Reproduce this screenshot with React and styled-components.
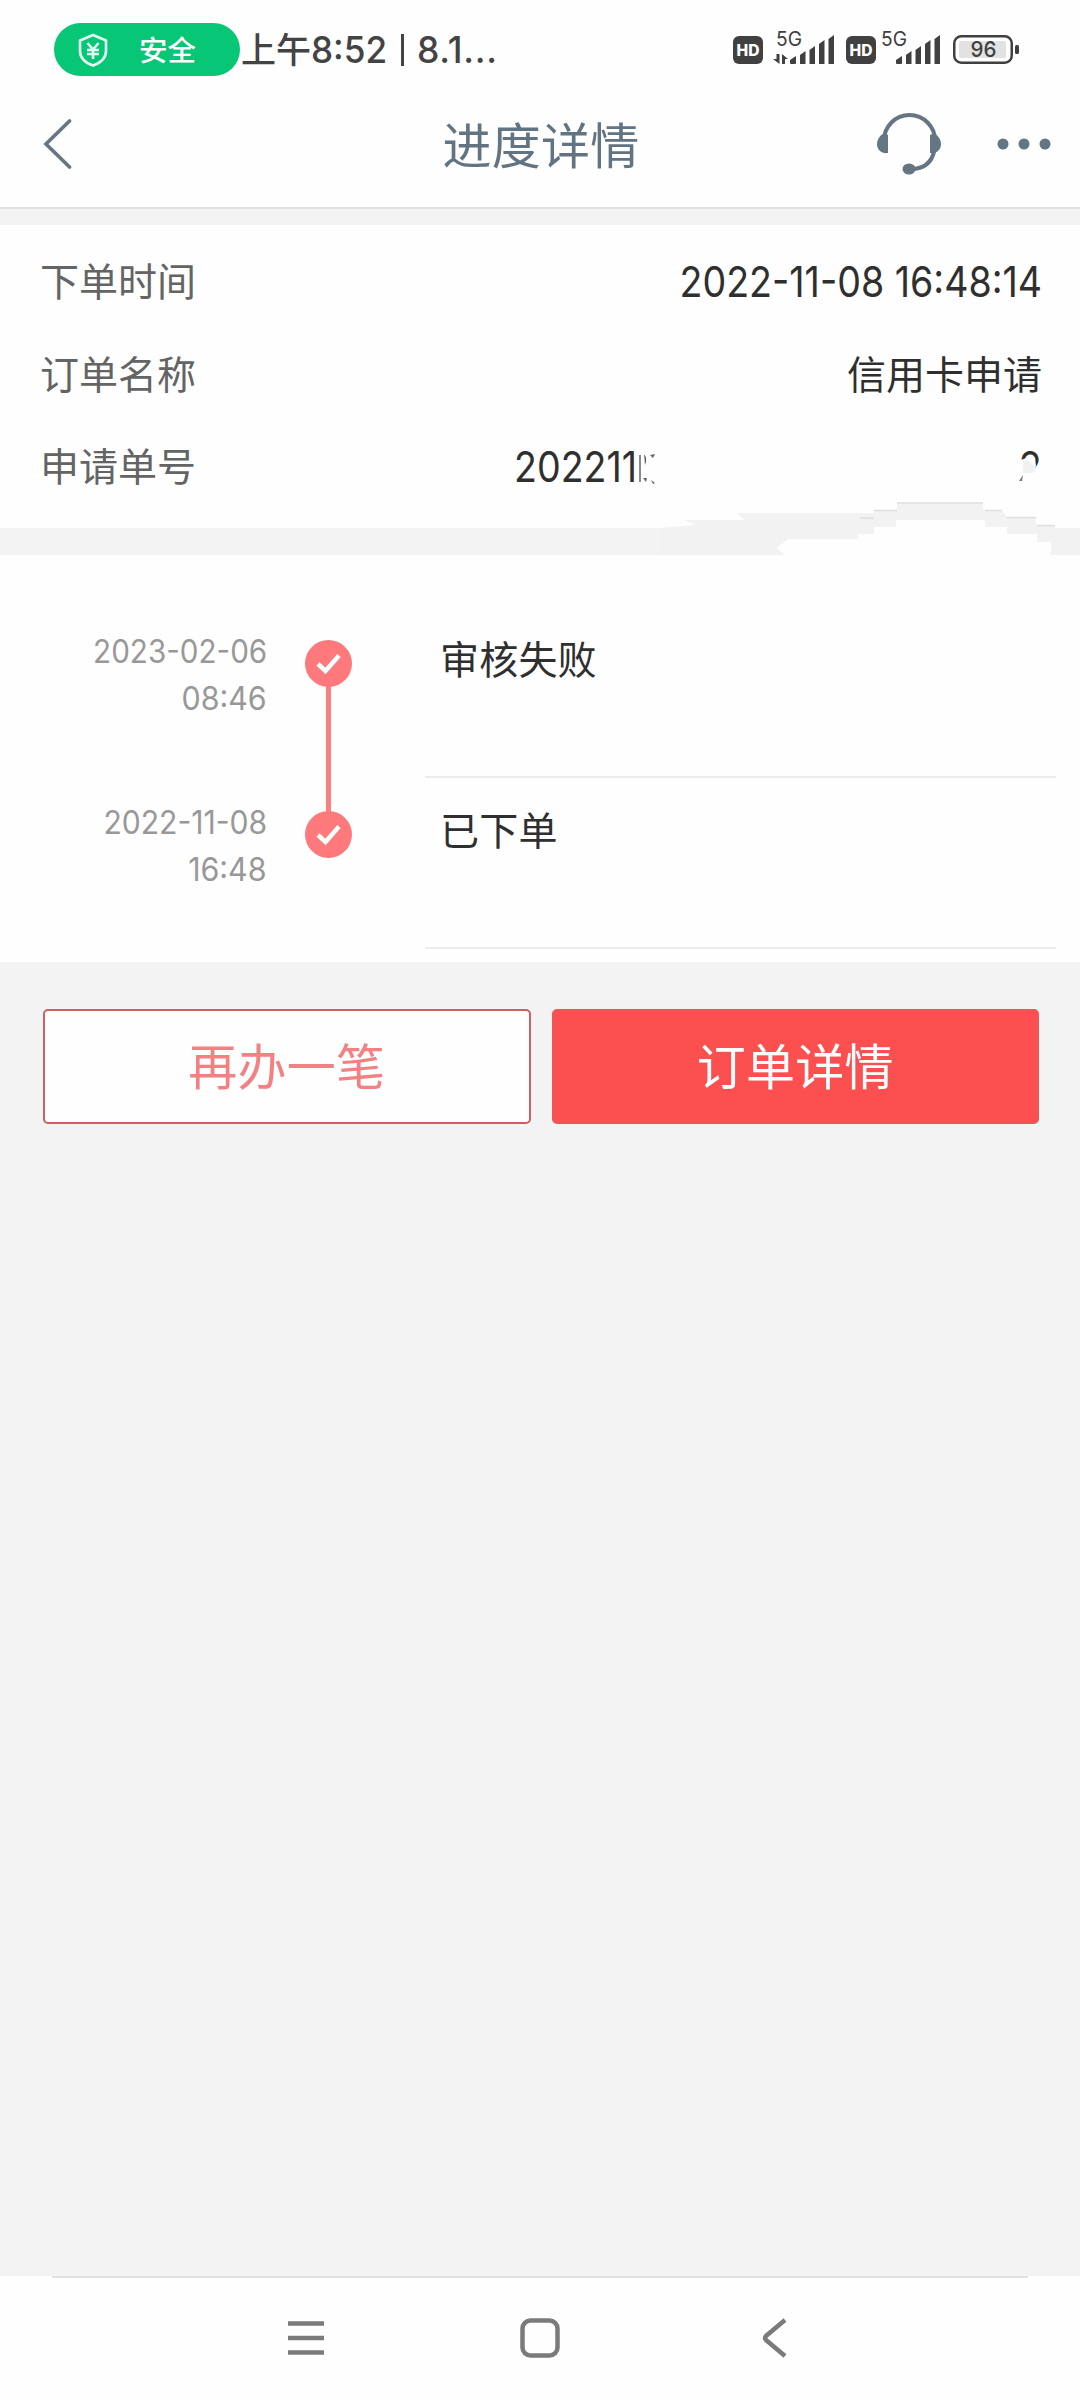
import React from 'react';
import styled, { createGlobalStyle } from 'styled-components';

const GlobalStyle = createGlobalStyle`
    * {
        box-sizing: border-box;
    }

    body {
        margin: 0;
        background: #f3f3f3;
        font-family: "Noto Sans CJK SC", sans-serif;
    }
`;

const Page = styled.div`
    display: flex;
    flex-direction: column;
    width: 1080px;
    height: 2400px;
    overflow: hidden;
    background: #f3f3f3;
`;

const Top = styled.div`
    height: 209px;
    background: #fefefe;
    border-bottom: 2px solid #e2e2e2;
`;

const StatusBar = styled.div`
    display: flex;
    justify-content: space-between;
    padding: 23px 61px 0 54px;
    height: 76px;
`;

const StatusSide = styled.div`
    display: flex;
    align-items: center;
    height: 53px;
`;

const SafePill = styled.div`
    display: flex;
    align-items: center;
    width: 186px;
    height: 53px;
    padding-left: 23px;
    gap: 30px;
    border-radius: 27px;
    background: #07c675;
    color: #fff;
    font-size: 28.5px;
    font-weight: 500;
    line-height: 53px;

    span {
        margin-top: -3px;
    }
`;

const Clock = styled.div`
    display: flex;
    align-items: center;
    padding-left: 1px;
    font-size: 35px;
    font-weight: 500;
    line-height: 53px;
    color: #434343;
    white-space: pre;
`;

const ClockHour = styled.span`
    margin-top: -4px;
`;

const ClockBar = styled.span`
    width: 3px;
    height: 32px;
    margin: 0 13px 0 10px;
    background: #434343;
`;

// Narrowed latin figures used for every number on the page
const Figures = styled.span`
    display: inline-block;
    font-family: Inter, sans-serif;
    font-size: ${p => p.$size}px;
    font-weight: ${p => p.$weight || 400};
    letter-spacing: ${p => p.$space || 0}px;
    transform: scaleX(${p => p.$stretch || 0.895});
    transform-origin: ${p => p.$origin || 'right'} center;
    white-space: pre;
`;

const NavBar = styled.div`
    display: grid;
    grid-template-columns: 1fr auto 1fr;
    align-items: center;
    height: 131px;
    padding: 0 29px 0 42px;
`;

const NavTitle = styled.h1`
    margin: 2px 11px 0 0;
    font-size: 49px;
    font-weight: 400;
    letter-spacing: 0.3px;
    line-height: 60px;
    color: #627481;
`;

const NavActions = styled.div`
    display: flex;
    justify-content: flex-end;
    align-items: center;
    gap: 56px;
    margin-top: 4px;
`;

const BackIcon = styled.svg`
    display: block;
    margin-top: 5px;
`;

const Info = styled.div`
    position: relative;
    display: flex;
    flex-direction: column;
    height: 303px;
    margin-top: 16px;
    padding: 11px 38px 0 40px;
    background: #fefefe;
`;

const InfoRow = styled.div`
    display: flex;
    justify-content: space-between;
    align-items: center;
    height: 92.5px;
    font-size: 39px;
    line-height: 60px;
`;

const InfoLabel = styled.span`
    margin-top: -6px;
    color: #646464;
`;

const InfoValue = styled.span`
    display: flex;
    align-items: center;
    color: #2f2f2f;
`;

const InfoName = styled(InfoValue)`
    margin-top: -6px;
`;

const OrderNumber = styled(InfoValue)`
    width: 528px;
    justify-content: space-between;
`;

// Wiped part of the order number, spills over the band below
const Smudge = styled.svg`
    position: absolute;
    left: 600px;
    top: 205px;
`;

const Timeline = styled.div`
    display: flex;
    flex-direction: column;
    height: 407px;
    margin-top: 27px;
    padding-top: 52px;
    background: #fefefe;
`;

const Step = styled.div`
    display: flex;
    height: 171px;
`;

const StepTime = styled.div`
    display: flex;
    flex-direction: column;
    align-items: flex-end;
    width: 267px;
    padding-top: 21px;
    line-height: 47px;
    color: #989898;
`;

const StepMark = styled.div`
    display: flex;
    flex-direction: column;
    align-items: center;
    width: 47px;
    margin-left: 38px;
    padding-top: 33px;
`;

const StepDot = styled.div`
    display: flex;
    flex: none;
    align-items: center;
    justify-content: center;
    width: 47px;
    height: 47px;
    border-radius: 50%;
    background: #fe797b;
`;

const StepLine = styled.div`
    flex: none;
    width: 5px;
    height: 126px;
    margin: -1px 0;
    background: #f97f80;
`;

const StepBody = styled.div`
    width: 631px;
    height: 171px;
    margin-left: 73px;
    padding: 20px 0 0 15px;
    border-bottom: 2px solid #ececec;
    font-size: 39px;
    letter-spacing: 0.2px;
    line-height: 60px;
    color: #2f2f2f;
`;

const Buttons = styled.div`
    display: flex;
    gap: 21px;
    padding: 47px 41px 0 43px;
    flex: 1;
`;

const Button = styled.button`
    flex: 1;
    height: 115px;
    padding: 0 0 6px;
    border: 2px solid ${p => p.$primary ? '#ee5558' : '#cc6064'};
    border-radius: 5px;
    background: ${p => p.$primary ? '#fc5050' : '#fefefe'};
    color: ${p => p.$primary ? '#fff' : '#f38183'};
    font-family: inherit;
    font-size: 49px;
    letter-spacing: 0.3px;
    line-height: 105px;
`;

const SystemNav = styled.div`
    display: flex;
    justify-content: center;
    height: 124px;
    background: #fefefe;
`;

const SystemKeys = styled.div`
    display: flex;
    justify-content: space-between;
    align-items: center;
    width: 976px;
    border-top: 2px solid #e2e2e2;
    padding: 0 241px 2px 236px;
`;

const HomeKey = styled.svg`
    margin-right: 5px;
`;

const ShieldIcon = () => (
  <svg width="32" height="34" viewBox="0 0 32 34" fill="none" stroke="#e6fff3" strokeWidth="2.6">
    <path d="M16 2 L29 7.500 V18 C29 25 23 30 16 32.500 C9 30 3 25 3 18 V7.500 Z" strokeLinejoin="round" />
    <path d="M10.500 10 L16 16.500 L21.500 10 M16 16 V26 M10 17 H22 M10 21 H22" />
  </svg>
);

const HdIcon = () => (
  <svg width="30" height="28" viewBox="0 0 30 28">
    <rect width="30" height="28" rx="6" fill="#404040" />
    <text x="15" y="19.500" textAnchor="middle" textLength="23" lengthAdjust="spacingAndGlyphs" fontFamily="Inter" fontWeight="800" fontSize="15.500" fill="#fff">HD</text>
  </svg>
);

const SignalIcon = ({ data }) => (
  <svg width="63" height="46" viewBox="0 -10 63 46" fill="#404040">
    <text x={data ? 3 : 0} y="15.500" textLength="26" lengthAdjust="spacingAndGlyphs" fontFamily="Inter" fontSize="20">5G</text>
    {data && <path d="M3.500 24 H6.500 V34 L0 29 H3.500 Z M9 34 V24 L15 29 H12 V34 Z" />}
    <g transform={data ? 'translate(2 0)' : 'translate(0 0)'}>
      <path d="M15 33 V30 L21 26 V33 Q21 34 20 34 H16 Q15 34 15 33 Z" />
      <path d="M25 34 V25 L30.500 21 V34 Z M34.500 34 V20 L40 16 V34 Z M44 34 V14 L49.500 10 V34 Z M53.500 34 V9 L59 5 V34 Z" />
    </g>
  </svg>
);

const BatteryIcon = () => (
  <svg width="66" height="29" viewBox="0 0 66 29">
    <rect x="1.250" y="1.250" width="57.500" height="26.500" rx="7" fill="none" stroke="#404040" strokeWidth="2.500" />
    <rect x="6" y="6" width="47" height="17" rx="2" fill="#e2e2e2" />
    <rect x="62" y="10" width="4" height="9" rx="1.500" fill="#404040" />
    <text x="30.500" y="22" textAnchor="middle" textLength="26" lengthAdjust="spacingAndGlyphs" fontFamily="Inter" fontWeight="500" fontSize="22" fill="#404040">96</text>
  </svg>
);

const StatusIcons = styled(StatusSide)`
    align-items: flex-start;
    padding-top: 4px;

    svg {
        display: block;
        flex: none;
    }
`;

const IconSlot = styled.div`
    margin: ${p => p.$top}px 0 0 ${p => p.$left || 0}px;
`;

const HeadsetIcon = () => (
  <svg width="64" height="64" viewBox="0 0 64 64" fill="#647583">
    <path d="M7 28.500 A25.500 25.500 0 0 1 58 28.500 M57.500 38 C55 50 47 57 34 57" fill="none" stroke="#647583" strokeWidth="4" />
    <path d="M11 23 V41 C5 42 0 38 0 32 C0 27 4 22 7 22 C10 22 11 23 11 23 Z" />
    <path d="M53 23 C53 23 54 22 57 22 C60 22 64 27 64 32 C64 38 59 42 53 41 Z" />
    <ellipse cx="32" cy="57" rx="6.500" ry="5.500" />
  </svg>
);

const DotsIcon = () => (
  <svg width="54" height="12" viewBox="0 0 54 12" fill="#647583">
    <circle cx="6" cy="6" r="5.500" />
    <circle cx="27" cy="6" r="5.500" />
    <circle cx="48" cy="6" r="5.500" />
  </svg>
);

const CheckIcon = () => (
  <svg width="25" height="22" viewBox="0 0 25 22">
    <path d="M2 11 L9.500 18 L23 2.500" fill="none" stroke="#fff" strokeWidth="4.500" />
  </svg>
);

const rows = [
  { date: '2023-02-06', time: '08:46', text: '审核失败', stretch: 0.925 },
  { date: '2022-11-08', time: '16:48', text: '已下单', stretch: 0.94 },
];

const App = () => {
  return (
    <Page>
      <GlobalStyle />
      <Top>
        <StatusBar>
          <StatusSide>
            <SafePill>
              <ShieldIcon />
              <span>安全</span>
            </SafePill>
            <Clock>
              <ClockHour>上午</ClockHour>
              <Figures $size={37} $weight={500} $stretch={0.95} $origin="left">8:52</Figures>
              <ClockBar />
              <Figures $size={37} $weight={500} $stretch={0.96} $space={0.8} $origin="left">8.1...</Figures>
            </Clock>
          </StatusSide>
          <StatusIcons>
            <IconSlot $top={9}><HdIcon /></IconSlot>
            <IconSlot $top={-7} $left={10}><SignalIcon data /></IconSlot>
            <IconSlot $top={9} $left={10}><HdIcon /></IconSlot>
            <IconSlot $top={-7} $left={5}><SignalIcon /></IconSlot>
            <IconSlot $top={8} $left={9}><BatteryIcon /></IconSlot>
          </StatusIcons>
        </StatusBar>
        <NavBar>
          <BackIcon width="30" height="52" viewBox="0 0 30 52">
            <path d="M27.500 3 L4 26 L27.500 49" fill="none" stroke="#647583" strokeWidth="3.600" strokeLinecap="round" />
          </BackIcon>
          <NavTitle>进度详情</NavTitle>
          <NavActions>
            <HeadsetIcon />
            <DotsIcon />
          </NavActions>
        </NavBar>
      </Top>

      <Info>
        <InfoRow>
          <InfoLabel>下单时间</InfoLabel>
          <InfoValue><Figures $size={42}>2022-11-08 16:48:14</Figures></InfoValue>
        </InfoRow>
        <InfoRow>
          <InfoLabel>订单名称</InfoLabel>
          <InfoName>信用卡申请</InfoName>
        </InfoRow>
        <InfoRow>
          <InfoLabel>申请单号</InfoLabel>
          <OrderNumber>
            <Figures $size={42} $origin="left">202211</Figures>
            <Figures $size={42}>2</Figures>
          </OrderNumber>
        </InfoRow>
        <Smudge width="480" height="150" viewBox="600 430 480 150">
          <path d="M660 528 L696 525 L684 520 H745 L737 513 H874 V510 H897 V503 H983 V510 H1002 L1007 517 H1036 V525 H1055 V528 H1080 V555 H1051 V542 H1037 V534 H1007 V527 H985 V520 H896 V527 H874 V534 H858 L854 539 H788 L780 545 L777 548 L785 555 H660 Z" fill="#f2f2f2" />
          <path d="M788 539 H858 V534 H874 V527 H896 V520 H985 V527 H1007 V534 H1037 V542 H1051 V556 H785 L777 548 Z" fill="#fefefe" />
          <path d="M860 518 H874 M874 510.500 H897 M897 503 H983 M985 510.500 H1002 M1007 517.500 H1036 M1037 525.500 H1055" stroke="#dedede" strokeWidth="1.500" fill="none" />
          <path d="M1016 462 L1026 458 L1035 458 L1036 466 L1033 470 L1040 474 H1046 V488 H1016 Z" fill="#fefefe" />
          <path d="M1023 462 L1028 460 L1036 468 L1033 473 H1023 Z" fill="#f1f1f1" />
          <path d="M1019 481 L1023 475 L1022 481 Z" fill="#777" />
          <path d="M644 454 Q648 459 645 465 Z M650 455 L655 454 L653 458 Z M643 478 L647 478 L646 482 Z M651 480 L655 483 L653 484 Z" fill="#666" />
          <path d="M640 455 V482" stroke="#8a8a8a" strokeWidth="2" fill="none" />
        </Smudge>
      </Info>

      <Timeline>
        {rows.map((row, i) => (
          <Step key={row.date}>
            <StepTime>
              <Figures $size={32} $stretch={row.stretch}>{row.date}</Figures>
              <Figures $size={32} $stretch={0.95}>{row.time}</Figures>
            </StepTime>
            <StepMark>
              <StepDot><CheckIcon /></StepDot>
              {i === 0 && <StepLine />}
            </StepMark>
            <StepBody>{row.text}</StepBody>
          </Step>
        ))}
      </Timeline>

      <Buttons>
        <Button>再办一笔</Button>
        <Button $primary>订单详情</Button>
      </Buttons>

      <SystemNav>
        <SystemKeys>
          <svg width="36" height="40" viewBox="2 0 36 40" fill="none" stroke="#7b7b7b" strokeWidth="4.500">
            <path d="M2 5.500 H38 M2 20 H38 M2 34.500 H38" />
          </svg>
          <HomeKey width="40" height="40" viewBox="0 0 40 40" fill="none" stroke="#7b7b7b" strokeWidth="4.500">
            <rect x="2.500" y="2.500" width="35" height="35" rx="8" />
          </HomeKey>
          <svg width="26" height="40" viewBox="0 0 26 40" fill="none" stroke="#7b7b7b" strokeWidth="4.500">
            <path d="M24 2 L5 18 Q3 20 5 22 L24 38" />
          </svg>
        </SystemKeys>
      </SystemNav>
    </Page>
  );
};

export default App;
